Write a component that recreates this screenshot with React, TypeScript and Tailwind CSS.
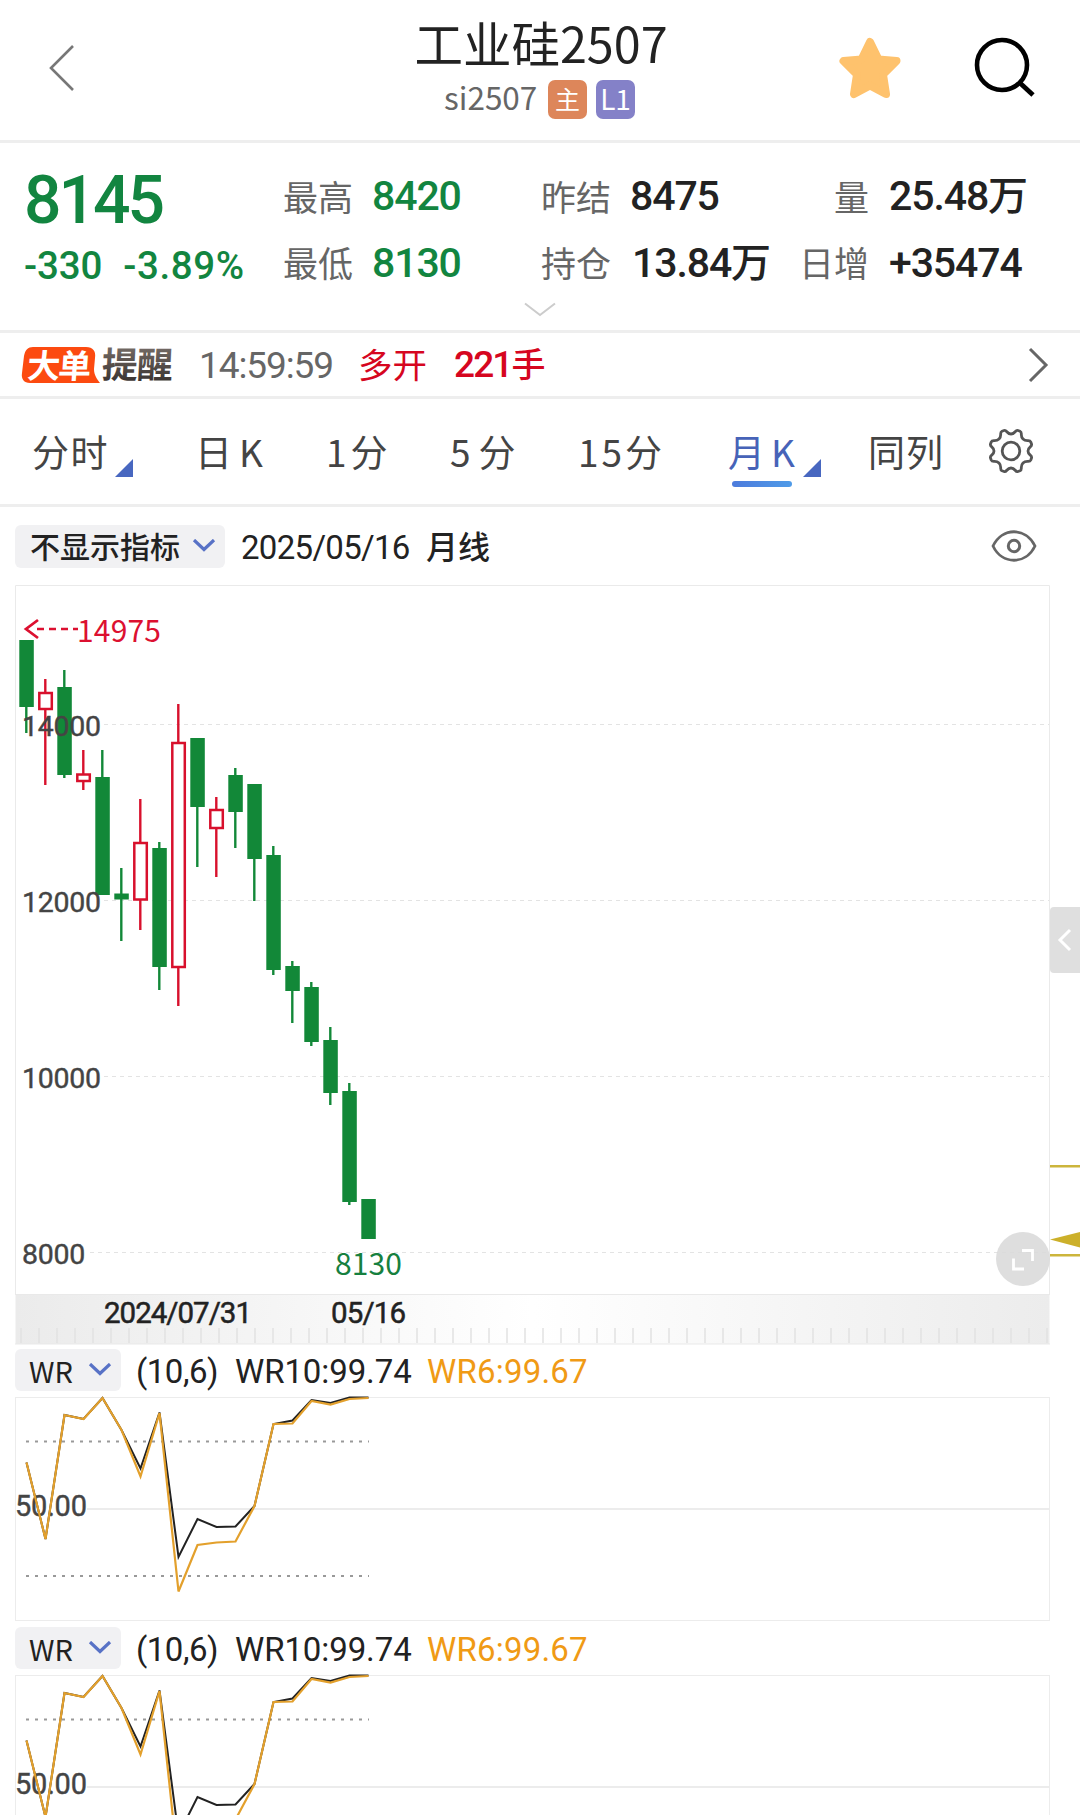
import React from "react";

type Candle = {
  high: number;
  top: number;
  bottom: number;
  low: number;
  up?: boolean;
};

const STEP = 19;

// y values are in the coordinates of the main chart svg
const candles: Candle[] = [
  { high: 55, top: 55, bottom: 122, low: 148 },
  { high: 94, top: 107, bottom: 125, low: 200, up: true },
  { high: 85, top: 102, bottom: 190, low: 193 },
  { high: 165, top: 188.5, bottom: 197, low: 205, up: true },
  { high: 165, top: 192, bottom: 310, low: 310 },
  { high: 283, top: 308.5, bottom: 314.5, low: 356 },
  { high: 214, top: 257, bottom: 315.5, low: 345, up: true },
  { high: 257, top: 263, bottom: 382, low: 405 },
  { high: 119, top: 157, bottom: 383, low: 421, up: true },
  { high: 153, top: 153, bottom: 222, low: 282 },
  { high: 212, top: 224, bottom: 244, low: 292, up: true },
  { high: 183, top: 190, bottom: 227, low: 263 },
  { high: 199, top: 199, bottom: 274, low: 316 },
  { high: 261, top: 270, bottom: 385, low: 390 },
  { high: 376, top: 381, bottom: 406, low: 438 },
  { high: 397, top: 402, bottom: 457, low: 461 },
  { high: 442, top: 455, bottom: 508, low: 520 },
  { high: 498, top: 506, bottom: 617, low: 620 },
  { high: 614, top: 614, bottom: 654, low: 654 },
];

const gridLines = [
  { label: "14000", y: 139.5 },
  { label: "12000", y: 315.5 },
  { label: "10000", y: 491.5 },
  { label: "8000", y: 667.5 },
];

const wr10 = [
  65.5, 142, 18, 22, 1, 33, 71.5, 15.5, 160, 122, 130, 129.5, 109, 27, 23.5, 3,
  6, 0.5, 0.5,
];
const wr6 = [
  65.5, 142, 18, 22, 1, 33, 79.5, 16, 194.5, 148, 145.5, 144.5, 109, 27, 26.5,
  4, 7.5, 2, 1,
];

const toPoints = (values: number[]) =>
  values.map((v, i) => `${11.5 + i * STEP},${v}`).join(" ");

const Chevron: React.FC = () => (
  <svg width="24" height="14" viewBox="0 0 24 14" fill="none">
    <path d="M2 1l10 9.500L22 1" stroke="#5872c6" strokeWidth="3.200" />
  </svg>
);

const Header: React.FC = () => (
  <div className="h-[143px] border-b-[3px] border-[#eeeeee] flex items-start">
    <div className="w-[400px] pl-12 pt-[43px]">
      <svg width="28" height="50" viewBox="0 0 28 50" fill="none">
        <path d="M25 3L3 25l22 22" stroke="#777" strokeWidth="2.600" />
      </svg>
    </div>
    <div className="w-[282px] flex flex-col items-center">
      <div className="mt-[12px] h-[60px] leading-[60px] text-[48.5px] text-[#222]">
        工业硅2507
      </div>
      <div className="mt-[8px] mr-[3px] flex items-center h-[39px] text-[31.5px] text-[#666] leading-[39px]">
        <span className="-mt-1.5 w-[96px]">si2507</span>
        <span className="ml-2 w-[39px] h-[39px] rounded-[7px] bg-[#dd865a] text-white text-[25px] leading-[36px] text-center">
          主
        </span>
        <span className="ml-[9px] w-[39px] h-[39px] rounded-[7px] bg-[#8481c8] text-white text-[28px] leading-[36px] text-center">
          L1
        </span>
      </div>
    </div>
    <div className="flex pl-[156px] pt-[35px]">
      <svg width="64" height="66" viewBox="0 0 64 66">
        <path
          d="M32 7l8.500 17.500 18 1.500-13.500 13.500 3 19.500-16-8.500L16 59l3-19.500L5.500 26l18-1.500z"
          fill="#fec26d"
          stroke="#fec26d"
          strokeWidth="8"
          strokeLinejoin="round"
        />
      </svg>
      <svg className="ml-[70px]" width="64" height="66" viewBox="0 0 64 66">
        <circle cx="30" cy="30" r="25" fill="none" stroke="#000" strokeWidth="4.600" />
        <path d="M48 48l13 12" stroke="#000" strokeWidth="4.800" />
      </svg>
    </div>
  </div>
);

const Label: React.FC<{ children: string }> = ({ children }) => (
  <span className="font-['Noto_Sans_CJK_SC',sans-serif] font-normal text-[35px] tracking-normal text-[#666] justify-self-start nth-6:justify-self-end">
    {children}
  </span>
);

const Quote: React.FC = () => (
  <div className="h-[190px] border-b-[3px] border-[#eeeeee] pt-5">
    <div className="h-[66px] pl-6 grid grid-cols-[259px_89px_169px_89px_172px_67px_1fr] leading-[66px] font-[Roboto,'Noto_Sans_CJK_SC',sans-serif] text-[41px] tracking-[-1.1px] font-medium text-[#222] whitespace-nowrap">
      <span className="text-[#128540] text-[66px] tracking-[-3px] pt-[5px]">8145</span>
      <Label>最高</Label>
      <span className="text-[#128540]">8420</span>
      <Label>昨结</Label>
      <span>8475</span>
      <Label>量</Label>
      <span className="pl-5">
        25.48<span className="text-[40px]">万</span>
      </span>
    </div>
    <div className="h-[66px] pl-6 grid grid-cols-[259px_89px_169px_89px_172px_67px_1fr] leading-[66px] font-[Roboto,'Noto_Sans_CJK_SC',sans-serif] text-[41px] tracking-[-1.1px] font-medium text-[#222] whitespace-nowrap">
      <span className="text-[#128540] text-[38.5px] pt-[4px]">
        <span className="tracking-[-0.1px]">-330</span>
        <span className="pl-[21px] tracking-[0.6px]">-3.89%</span>
      </span>
      <Label>最低</Label>
      <span className="text-[#128540] pt-px">8130</span>
      <Label>持仓</Label>
      <span className="pl-0.5 pt-px">
        13.84<span className="text-[40px]">万</span>
      </span>
      <Label>日增</Label>
      <span className="pl-5 pt-px">+35474</span>
    </div>
    <div className="flex justify-center pt-[6px]">
      <svg width="34" height="16" viewBox="0 0 34 16" fill="none">
        <path d="M2 2.500l15 11.500L32 2.500" stroke="#ccc" strokeWidth="2" />
      </svg>
    </div>
  </div>
);

const BigOrder: React.FC = () => (
  <div className="h-[66px] border-b-[3px] border-[#eeeeee] flex items-center whitespace-nowrap">
    <svg className="ml-5 overflow-visible" width="156" height="44" viewBox="0 0 156 44">
      <defs>
        <linearGradient id="tag" x1="0" x2="0" y1="0" y2="1">
          <stop offset="0" stopColor="#857b75" />
          <stop offset="1" stopColor="#302a28" />
        </linearGradient>
      </defs>
      <path
        d="M13 4h53c7 0 10 4 9 11l-1 11c0 6 3 10 6 14H10C4 40 1 36 2 30L4 13c1-6 4-9 9-9z"
        fill="#fc4a10"
      />
      <g fontFamily="Noto Sans CJK SC, sans-serif" fontWeight="700" fontSize="33">
        <text x="9" y="34.500" fill="#fff" textLength="64" transform="skewX(-4)">
          大单
        </text>
        <text x="83" y="35" fill="url(#tag)" textLength="71" fontSize="36" transform="skewX(-3)">
          提醒
        </text>
      </g>
    </svg>
    <span className="ml-[23px] w-[159px] pt-[3px] font-[Roboto] text-[37px] tracking-[-1.1px] text-[#666]">
      14:59:59
    </span>
    <span className="w-[96px] text-[34.5px] text-[#d6061f] -mt-0.5">多开</span>
    <span className="font-[Roboto,'Noto_Sans_CJK_SC',sans-serif] font-medium text-[37px] tracking-[-1.9px] text-[#d6061f]">
      221<span className="text-[34px]">手</span>
    </span>
    <svg className="ml-auto mr-[30px]" width="22" height="38" viewBox="0 0 22 38" fill="none">
      <path d="M2 3l16 16L2 35" stroke="#666" strokeWidth="3" />
    </svg>
  </div>
);

const Triangle: React.FC = () => (
  <svg width="18" height="18" viewBox="0 0 18 18" className="mt-[60px]">
    <path d="M18 0v18H0z" fill="#4867c0" />
  </svg>
);

const Tabs: React.FC = () => (
  <div className="h-[108px] border-b-[3px] border-[#eeeeee] flex text-[37px] leading-[104px] text-[#444] whitespace-nowrap">
    <span className="ml-8 w-[83px] tracking-[1.5px]">分时</span>
    <Triangle />
    <span className="ml-[62px] w-[131px] tracking-[7px]">日K</span>
    <span className="w-[124px] tracking-[4px]">1分</span>
    <span className="w-[128px] tracking-[8px]">5分</span>
    <span className="w-[149px] tracking-[3px]">15分</span>
    <div className="w-[76px] text-[#4763b8]">
      <div className="h-[82px] pl-px tracking-[6px]">月K</div>
      <div className="ml-[5px] w-[60px] h-[6px] rounded-full bg-linear-to-r from-[#4d7bdc] to-[#4f9be8]" />
    </div>
    <Triangle />
    <span className="ml-[47px] w-[120px] tracking-[1px]">同列</span>
    <svg className="mt-[29px]" width="46" height="46" viewBox="-23 -23 46 46" fill="none">
      <path
        d="M-7-20.500C-4-21.500-4.500-17 0-17S4-21.500 7-20.500L9-19.800C12-18.500 8.500-15.500 12-12S18.500-12 19.800-9L20.500-7C21.500-4 17-4.500 17 0S21.500 4 20.500 7L19.800 9C18.500 12 15.500 8.500 12 12S12 18.500 9 19.800L7 20.500C4 21.500 4.500 17 0 17S-4 21.500-7 20.500L-9 19.800C-12 18.500-8.500 15.500-12 12S-18.500 12-19.800 9L-20.500 7C-21.500 4-17 4.500-17 0S-21.500-4-20.500-7L-19.800-9C-18.500-12-15.500-8.500-12-12S-12-18.500-9-19.800z"
        stroke="#555"
        strokeWidth="2.800"
      />
      <circle r="8.800" stroke="#555" strokeWidth="2.800" />
    </svg>
  </div>
);

const ChartToolbar: React.FC = () => (
  <div className="h-[78px] flex items-center pl-[15px] whitespace-nowrap">
    <div className="w-[210px] h-[43px] rounded-md bg-[#f1f1f3] flex items-center pl-[15px] text-[30px] leading-[40px] font-medium text-[#222]">
      <span className="-mt-0.5 w-[162px]">不显示指标</span>
      <Chevron />
    </div>
    <span className="ml-[16px] w-[185px] pt-1 font-[Roboto] text-[33px] tracking-[-0.7px] text-[#222]">
      2025/05/16
    </span>
    <span className="text-[32px] font-medium text-[#222] -mt-0.5">月线</span>
    <svg className="ml-auto mr-[42px]" width="48" height="34" viewBox="0 0 48 34" fill="none">
      <path
        d="M3 17C12-2 36-2 45 17C36 36 12 36 3 17z"
        stroke="#666"
        strokeWidth="2.800"
      />
      <circle cx="24" cy="17" r="5.700" stroke="#666" strokeWidth="3" />
    </svg>
  </div>
);

const MainChart: React.FC = () => (
  <div className="relative">
    <svg className="block" width="1080" height="760" viewBox="0 0 1080 760">
      <defs>
        <linearGradient id="axis">
          <stop offset="0" stopColor="#ebebeb" />
          <stop offset=".5" stopColor="#fff" />
          <stop offset="1" stopColor="#ececec" />
        </linearGradient>
      </defs>
      <path d="M15.500 709V.5h1034V709" fill="none" stroke="#eaeaea" />
      {gridLines.map((g) => (
        <line
          key={g.y}
          x1={g.label.length > 4 ? 104 : 90}
          x2="1049"
          y1={g.y}
          y2={g.y}
          stroke="#e3e3e3"
          strokeDasharray="4 4"
        />
      ))}
      {candles.map((c, i) => {
        const x = 26.3 + i * STEP;
        const color = c.up ? "#d8102c" : "#128838";
        return (
          <g key={i}>
            <line x1={x} x2={x} y1={c.high} y2={c.low} stroke={color} strokeWidth="2.400" />
            {c.up ? (
              <rect
                x={x - 6}
                y={c.top + 1}
                width="12.500"
                height={c.bottom - c.top - 2}
                fill="#fff"
                stroke={color}
                strokeWidth="2.500"
              />
            ) : (
              <rect x={x - 7} y={c.top} width="14.500" height={c.bottom - c.top} fill={color} />
            )}
          </g>
        );
      })}
      <path d="M38 35L26 44l12 9" fill="none" stroke="#dc1030" strokeWidth="2.800" />
      <path d="M37 44H78" stroke="#dc1030" strokeWidth="2.600" strokeDasharray="7 5" />
      <g fontFamily="Noto Sans CJK SC, sans-serif" fontSize="30">
        <text x="77" y="57" fill="#dc1030" textLength="84">
          14975
        </text>
        <text x="335" y="690" fill="#16803f" textLength="67">
          8130
        </text>
      </g>
      <g
        fontFamily="Roboto, sans-serif"
        fontSize="28.500"
        fill="#444"
        stroke="#444"
        strokeWidth=".4"
      >
        {gridLines.map((g) => (
          <text key={g.y} x="22" y={g.y + 11.5} textLength={g.label.length * 15.8}>
            {g.label}
          </text>
        ))}
      </g>
      <rect x="15.500" y="709" width="1034" height="50" fill="url(#axis)" />
      {Array.from({ length: 58 }, (_, i) => (
        <line
          key={i}
          x1={21 + i * 18}
          x2={21 + i * 18}
          y1="743"
          y2="758"
          stroke="#e2e2e2"
          strokeWidth="1.500"
        />
      ))}
      <path d="M15 709.500H1050M15 759H1050" stroke="#e9e9e9" />
      <g
        fontFamily="Roboto, sans-serif"
        fontSize="29.500"
        fill="#222"
        stroke="#222"
        strokeWidth=".5"
      >
        <text x="104" y="738" textLength="148">
          2024/07/31
        </text>
        <text x="331" y="738" textLength="75">
          05/16
        </text>
      </g>
      <path d="M1050 581.300H1080M1050 670.300H1080" stroke="#ccb53c" strokeWidth="2.600" />
      <path d="M1050 654.500L1080 647v15.500z" fill="#ccb02a" />
      <circle cx="1023" cy="674" r="27" fill="#dadada" fillOpacity=".88" />
      <path d="M1022 665.500h10.500V676M1024 684h-10.500V673.500" fill="none" stroke="#fff" strokeWidth="2.800" />
    </svg>
    <div className="absolute right-0 top-[322px] w-[30px] h-[66px] rounded-l-sm bg-[#dfdfdf] flex items-center justify-center">
      <svg width="16" height="24" viewBox="0 0 16 24" fill="none">
        <path d="M13 2L3 12l10 10" stroke="#fff" strokeWidth="3" />
      </svg>
    </div>
  </div>
);

const WrPanel: React.FC = () => (
  <div className="h-[278px] pt-1">
    <div className="ml-[15px] h-[42px] flex items-center whitespace-nowrap">
      <div className="w-[106px] h-[42px] rounded-md bg-[#f1f1f3] flex items-center pl-[14px] text-[29px] leading-[40px] text-[#222]">
        <span className="w-[59px]">WR</span>
        <Chevron />
      </div>
      <div className="flex pl-[15px] pt-1 font-[Roboto] text-[33px] leading-[42px] text-[#222]">
        <span className="w-[99px] tracking-[-0.5px]">(10,6)</span>
        <span className="w-[192px] tracking-[-0.1px]">WR10:99.74</span>
        <span className="text-[#f09a15] tracking-[0.2px]">WR6:99.67</span>
      </div>
    </div>
    <svg className="block ml-[15px] mt-[6px] overflow-visible" width="1035" height="225" viewBox="0 0 1035 225" fill="none">
      <rect x=".5" y=".5" width="1034" height="223" stroke="#ececec" />
      <path d="M72 112H1034" stroke="#ececec" strokeWidth="2" />
      <path d="M11 44.500H354M11 179H354" stroke="#999" strokeWidth="2" strokeDasharray="3 6" />
      <text
        x="0"
        y="119"
        fontFamily="Roboto, sans-serif"
        fontSize="29"
        fill="#444"
        stroke="#444"
        strokeWidth=".4"
        textLength="72"
      >
        50.00
      </text>
      <polyline points={toPoints(wr10)} stroke="#222" strokeWidth="2" />
      <polyline points={toPoints(wr6)} stroke="#e3a02c" strokeWidth="2.200" />
    </svg>
  </div>
);

const App: React.FC = () => {
  return (
    <div className="w-[1080px] h-[1815px] overflow-hidden bg-white font-['Noto_Sans_CJK_SC',sans-serif]">
      <Header />
      <Quote />
      <BigOrder />
      <Tabs />
      <ChartToolbar />
      <MainChart />
      <WrPanel />
      <WrPanel />
    </div>
  );
};

export default App;
